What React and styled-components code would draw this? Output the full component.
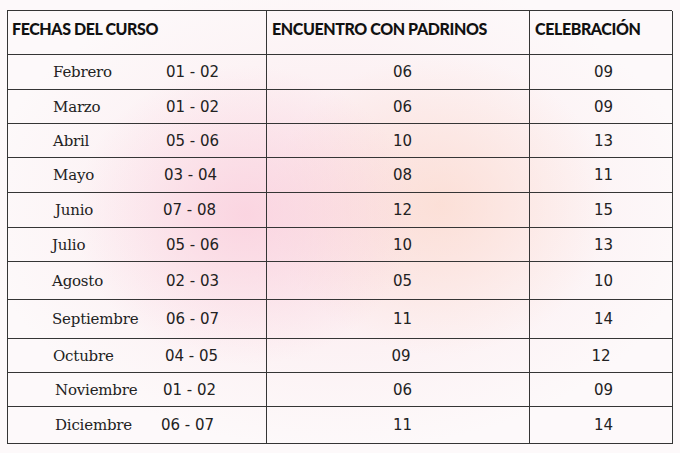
import React from 'react'
import styled, { createGlobalStyle } from 'styled-components'

const GlobalStyle = createGlobalStyle`
  html, body {
    margin: 0;
    padding: 0;
  }
  body {
    width: 680px;
    height: 453px;
    overflow: hidden;
    background-color: #fdf9fa;
    background-image:
      radial-gradient(ellipse 170px 150px at 245px 215px, rgba(250, 205, 220, 0.75), rgba(250, 205, 220, 0) 100%),
      radial-gradient(ellipse 170px 150px at 440px 205px, rgba(252, 218, 205, 0.7), rgba(252, 218, 205, 0) 100%),
      radial-gradient(ellipse 360px 240px at 340px 210px, rgba(251, 230, 234, 0.9), rgba(251, 230, 234, 0) 100%);
    color: #222;
  }
`

const Page = styled.div`
  padding: 10px 0 0 7px;
`

const Grid = styled.div`
  display: grid;
  grid-template-columns: 259px 263px 143px;
  grid-template-rows: 44px 35px 34px 34px 35px 35px 34px 38px 39px 34px 34px 37px;
  width: 665px;
  border-top: 1.5px solid #353535;
  border-left: 1.5px solid #353535;
  box-sizing: border-box;
`

const Cell = styled.div`
  display: flex;
  align-items: center;
  box-sizing: border-box;
  border-right: 1.5px solid #353535;
  border-bottom: 1.5px solid #353535;
  min-width: 0;
`

const HeadCell = styled(Cell)`
  align-items: flex-start;
  padding: 8px 0 0 ${({ $pad }) => $pad}px;
  font-family: Lato, 'Open Sans', sans-serif;
  font-weight: 900;
  font-size: 16px;
  letter-spacing: -0.4px;
  color: #111;
`

const DateCell = styled(Cell)`
  padding-left: 45px;
`

const Month = styled.span`
  width: 113px;
  flex: none;
  margin-left: ${({ $shift }) => $shift}px;
  font-family: 'DejaVu Serif', 'Liberation Serif', serif;
  font-size: 15px;
  letter-spacing: -0.2px;
`

const Range = styled.span`
  margin-left: ${({ $shift }) => $shift}px;
  font-family: 'DejaVu Sans', sans-serif;
  font-size: 15px;
  white-space: pre;
`

const NumCell = styled(Cell)`
  justify-content: center;
  padding-left: ${({ $pad }) => $pad}px;
  font-family: 'DejaVu Sans', sans-serif;
  font-size: 15px;
`

const rows = [
  { month: 'Febrero', range: '01 - 02', meet: '06', party: '09' },
  { month: 'Marzo', range: '01 - 02', meet: '06', party: '09' },
  { month: 'Abril', range: '05 - 06', meet: '10', party: '13' },
  { month: 'Mayo', range: '03 - 04', meet: '08', party: '11', r: -2 },
  { month: 'Junio', range: '07 - 08', meet: '12', party: '15', m: 2, r: -5 },
  { month: 'Julio', range: '05 - 06', meet: '10', party: '13', m: -1, r: 1 },
  { month: 'Agosto', range: '02 - 03', meet: '05', party: '10', m: -1, r: 1 },
  { month: 'Septiembre', range: '06 - 07', meet: '11', party: '14', m: -1, r: 1 },
  { month: 'Octubre', range: '04 - 05', meet: '09', party: '12', r: -1, mp: -3, pp: -6 },
  { month: 'Noviembre', range: '01 - 02', meet: '06', party: '09', m: 2, r: -5 },
  { month: 'Diciembre', range: '06 - 07', meet: '11', party: '14', m: 2, r: -7 },
]

const App = () => (
  <>
    <GlobalStyle />
    <Page>
      <Grid>
        <HeadCell $pad={4}>FECHAS DEL CURSO</HeadCell>
        <HeadCell $pad={5}>ENCUENTRO CON PADRINOS</HeadCell>
        <HeadCell $pad={5}>CELEBRACIÓN</HeadCell>
        {rows.map(({ month, range, meet, party, m = 0, r = 0, mp = 0, pp = 0 }) => (
          <React.Fragment key={month}>
            <DateCell>
              <Month $shift={m}>{month}</Month>
              <Range $shift={r}>{range}</Range>
            </DateCell>
            <NumCell $pad={9 + mp}>{meet}</NumCell>
            <NumCell $pad={5 + pp}>{party}</NumCell>
          </React.Fragment>
        ))}
      </Grid>
    </Page>
  </>
)

export default App
